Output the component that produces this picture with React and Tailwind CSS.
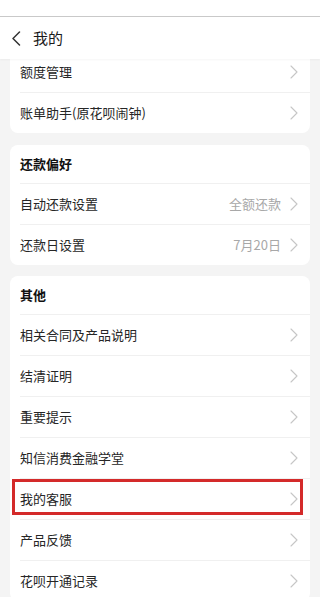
const font = { fontFamily: '"Noto Sans CJK SC", "Noto Sans", sans-serif' }

function Chevron() {
  return (
    <svg width="8" height="14" viewBox="0 0 8 14" className="mr-[12px] shrink-0" fill="none">
      <path d="M1 1l6 6-6 6" stroke="#c6c6c6" strokeWidth="1.1" strokeLinecap="round" strokeLinejoin="round" />
    </svg>
  )
}

function Row({ label, value, first, boxed }) {
  return (
    <div className="relative h-[41px] flex items-center pl-[10px]">
      {!first && <div className="absolute top-0 left-[10px] right-0 h-px bg-[#f0f0f0]" />}
      <span className="flex-1 text-[13px] text-[#262626]">{label}</span>
      {value && <span className="text-[13px] text-[#a8a8a8] mr-[9px]">{value}</span>}
      <Chevron />
      {boxed && (
        <div className="absolute left-[2px] right-[7px] top-[1px] bottom-[4px] border-[3px] border-[#d42a2a]" />
      )}
    </div>
  )
}

function Card({ title, rows, className = '' }) {
  return (
    <div className={`mx-[10px] bg-white rounded-lg ${className}`}>
      {title && (
        <div className="h-[38px] flex items-center pl-[10px] text-[13px] font-bold text-[#111]">{title}</div>
      )}
      {rows.map((r, i) => (
        <Row key={r.label} {...r} first={!title && i === 0} />
      ))}
    </div>
  )
}

export default function App() {
  return (
    <div className="w-[320px] h-[597px] bg-[#f4f4f4] flex flex-col overflow-hidden" style={font}>
      <div className="h-[16px] bg-white shrink-0" />
      <div className="h-px bg-[#c9c9c9] shrink-0" />
      <div className="h-[42px] bg-white flex items-center shrink-0 relative z-10 shadow-[0_1px_2px_rgba(0,0,0,0.04)]">
        <svg width="10" height="15" viewBox="0 0 10 15" fill="none" className="ml-[11px]">
          <path d="M8.5 1L2 7.5 8.5 14" stroke="#333" strokeWidth="1.5" strokeLinecap="round" strokeLinejoin="round" />
        </svg>
        <span className="ml-[12px] text-[15px] text-[#1a1a1a]">我的</span>
      </div>
      <div className="flex-1 overflow-hidden">
        <Card
          className="-mt-[8px]"
          rows={[{ label: '额度管理' }, { label: '账单助手(原花呗闹钟)' }]}
        />
        <Card
          className="mt-[12px]"
          title="还款偏好"
          rows={[
            { label: '自动还款设置', value: '全额还款' },
            { label: '还款日设置', value: '7月20日' },
          ]}
        />
        <Card
          className="mt-[11px]"
          title="其他"
          rows={[
            { label: '相关合同及产品说明' },
            { label: '结清证明' },
            { label: '重要提示' },
            { label: '知信消费金融学堂' },
            { label: '我的客服', boxed: true },
            { label: '产品反馈' },
            { label: '花呗开通记录' },
          ]}
        />
      </div>
    </div>
  )
}
